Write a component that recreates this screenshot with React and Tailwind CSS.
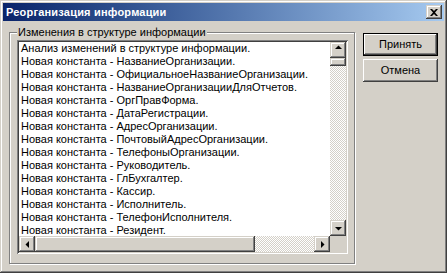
import React from 'react';

const items = [
  'Анализ изменений в структуре информации.',
  'Новая константа - НазваниеОрганизации.',
  'Новая константа - ОфициальноеНазваниеОрганизации.',
  'Новая константа - НазваниеОрганизацииДляОтчетов.',
  'Новая константа - ОргПравФорма.',
  'Новая константа - ДатаРегистрации.',
  'Новая константа - АдресОрганизации.',
  'Новая константа - ПочтовыйАдресОрганизации.',
  'Новая константа - ТелефоныОрганизации.',
  'Новая константа - Руководитель.',
  'Новая константа - ГлБухгалтер.',
  'Новая константа - Кассир.',
  'Новая константа - Исполнитель.',
  'Новая константа - ТелефонИсполнителя.',
  'Новая константа - Резидент.',
];

// raised 3D edge used by scrollbar parts
const raised =
  'bg-[#d4d0c8] shadow-[inset_-1px_-1px_0_#404040,inset_1px_1px_0_#d4d0c8,inset_-2px_-2px_0_#808080,inset_2px_2px_0_#ffffff]';

const track =
  'bg-[image:repeating-conic-gradient(#ffffff_0_25%,#d4d0c8_0_50%)] bg-size-[2px_2px]';

const Arrow = ({ dir }) => {
  const pts = {
    up: '4,6 11,6 7.5,2.5',
    down: '4,6 11,6 7.5,9.5',
    left: '9,4 9,11 5.5,7.5',
    right: '6,4 6,11 9.5,7.5',
  }[dir];
  return (
    <div className={`w-[16px] h-[16px] shrink-0 flex items-center justify-center ${raised}`}>
      <svg width="14" height="14" viewBox="0 0 14 14">
        <polygon points={pts} fill="#000" />
      </svg>
    </div>
  );
};

const Button = ({ children, isDefault }) => (
  <div
    className={`w-[75px] h-[23px] flex items-center justify-center bg-[#d4d0c8] ${
      isDefault
        ? 'shadow-[inset_0_0_0_1px_#000000,inset_-2px_-2px_0_#404040,inset_2px_2px_0_#ffffff,inset_-3px_-3px_0_#808080]'
        : 'shadow-[inset_-1px_-1px_0_#404040,inset_1px_1px_0_#ffffff,inset_-2px_-2px_0_#808080]'
    }`}
  >
    {children}
  </div>
);

export default function App() {
  return (
    <div
      className="w-[447px] h-[273px] p-[3px] bg-[#d4d0c8] text-[11px] text-black flex flex-col shadow-[inset_-1px_-1px_0_#404040,inset_1px_1px_0_#d4d0c8,inset_-2px_-2px_0_#808080,inset_2px_2px_0_#ffffff]"
      style={{ fontFamily: '"Liberation Sans", Arial, sans-serif' }}
    >
      {/* title bar */}
      <div className="h-[18px] shrink-0 flex items-center pl-[3px] pr-[2px] bg-linear-to-r from-[#0a246a] to-[#a6caf0]">
        <span className="flex-1 text-white font-bold leading-none tracking-[0.2px]">Реорганизация информации</span>
        <div className={`w-[16px] h-[14px] flex items-center justify-center ${raised}`}>
          <svg width="8" height="7" viewBox="0 0 8 7">
            <path d="M0 0h2l2 2 2-2h2L5 3.5 8 7H6L4 5 2 7H0l3-3.5z" fill="#000" />
          </svg>
        </div>
      </div>

      <div className="flex">
        {/* group box */}
        <div className="relative mt-[11px] ml-[6px] w-[346px] h-[232px] pl-[7px] pt-[7px] border border-[#808080] shadow-[inset_1px_1px_0_#ffffff,1px_1px_0_#ffffff]">
          <span className="absolute left-[7px] -top-[7px] px-px leading-[13px] bg-[#d4d0c8]">
            Изменения в структуре информации
          </span>

          {/* list box */}
          <div className="w-[331px] h-[214px] p-[2px] shadow-[inset_1px_1px_0_#808080,inset_-1px_-1px_0_#ffffff,inset_2px_2px_0_#404040,inset_-2px_-2px_0_#d4d0c8]">
            <div className="w-full h-full flex flex-col bg-white">
              <div className="flex flex-1 min-h-0">
                <div className="flex-1 overflow-hidden">
                  {items.map((t) => (
                    <div key={t} className="h-[13px] leading-[13px] pl-[2px] whitespace-nowrap">
                      {t}
                    </div>
                  ))}
                </div>
                <div className="w-[16px] flex flex-col">
                  <Arrow dir="up" />
                  <div className={`h-[8px] ${raised}`} />
                  <div className={`flex-1 ${track}`} />
                  <Arrow dir="down" />
                </div>
              </div>
              <div className="h-[16px] flex">
                <Arrow dir="left" />
                <div className={`w-[220px] ${raised}`} />
                <div className={`flex-1 ${track}`} />
                <Arrow dir="right" />
                <div className="w-[16px] bg-[#d4d0c8]" />
              </div>
            </div>
          </div>
        </div>

        {/* buttons */}
        <div className="ml-[8px] mt-[12px] flex flex-col gap-[3px]">
          <Button isDefault>Принять</Button>
          <Button>Отмена</Button>
        </div>
      </div>
    </div>
  );
}
